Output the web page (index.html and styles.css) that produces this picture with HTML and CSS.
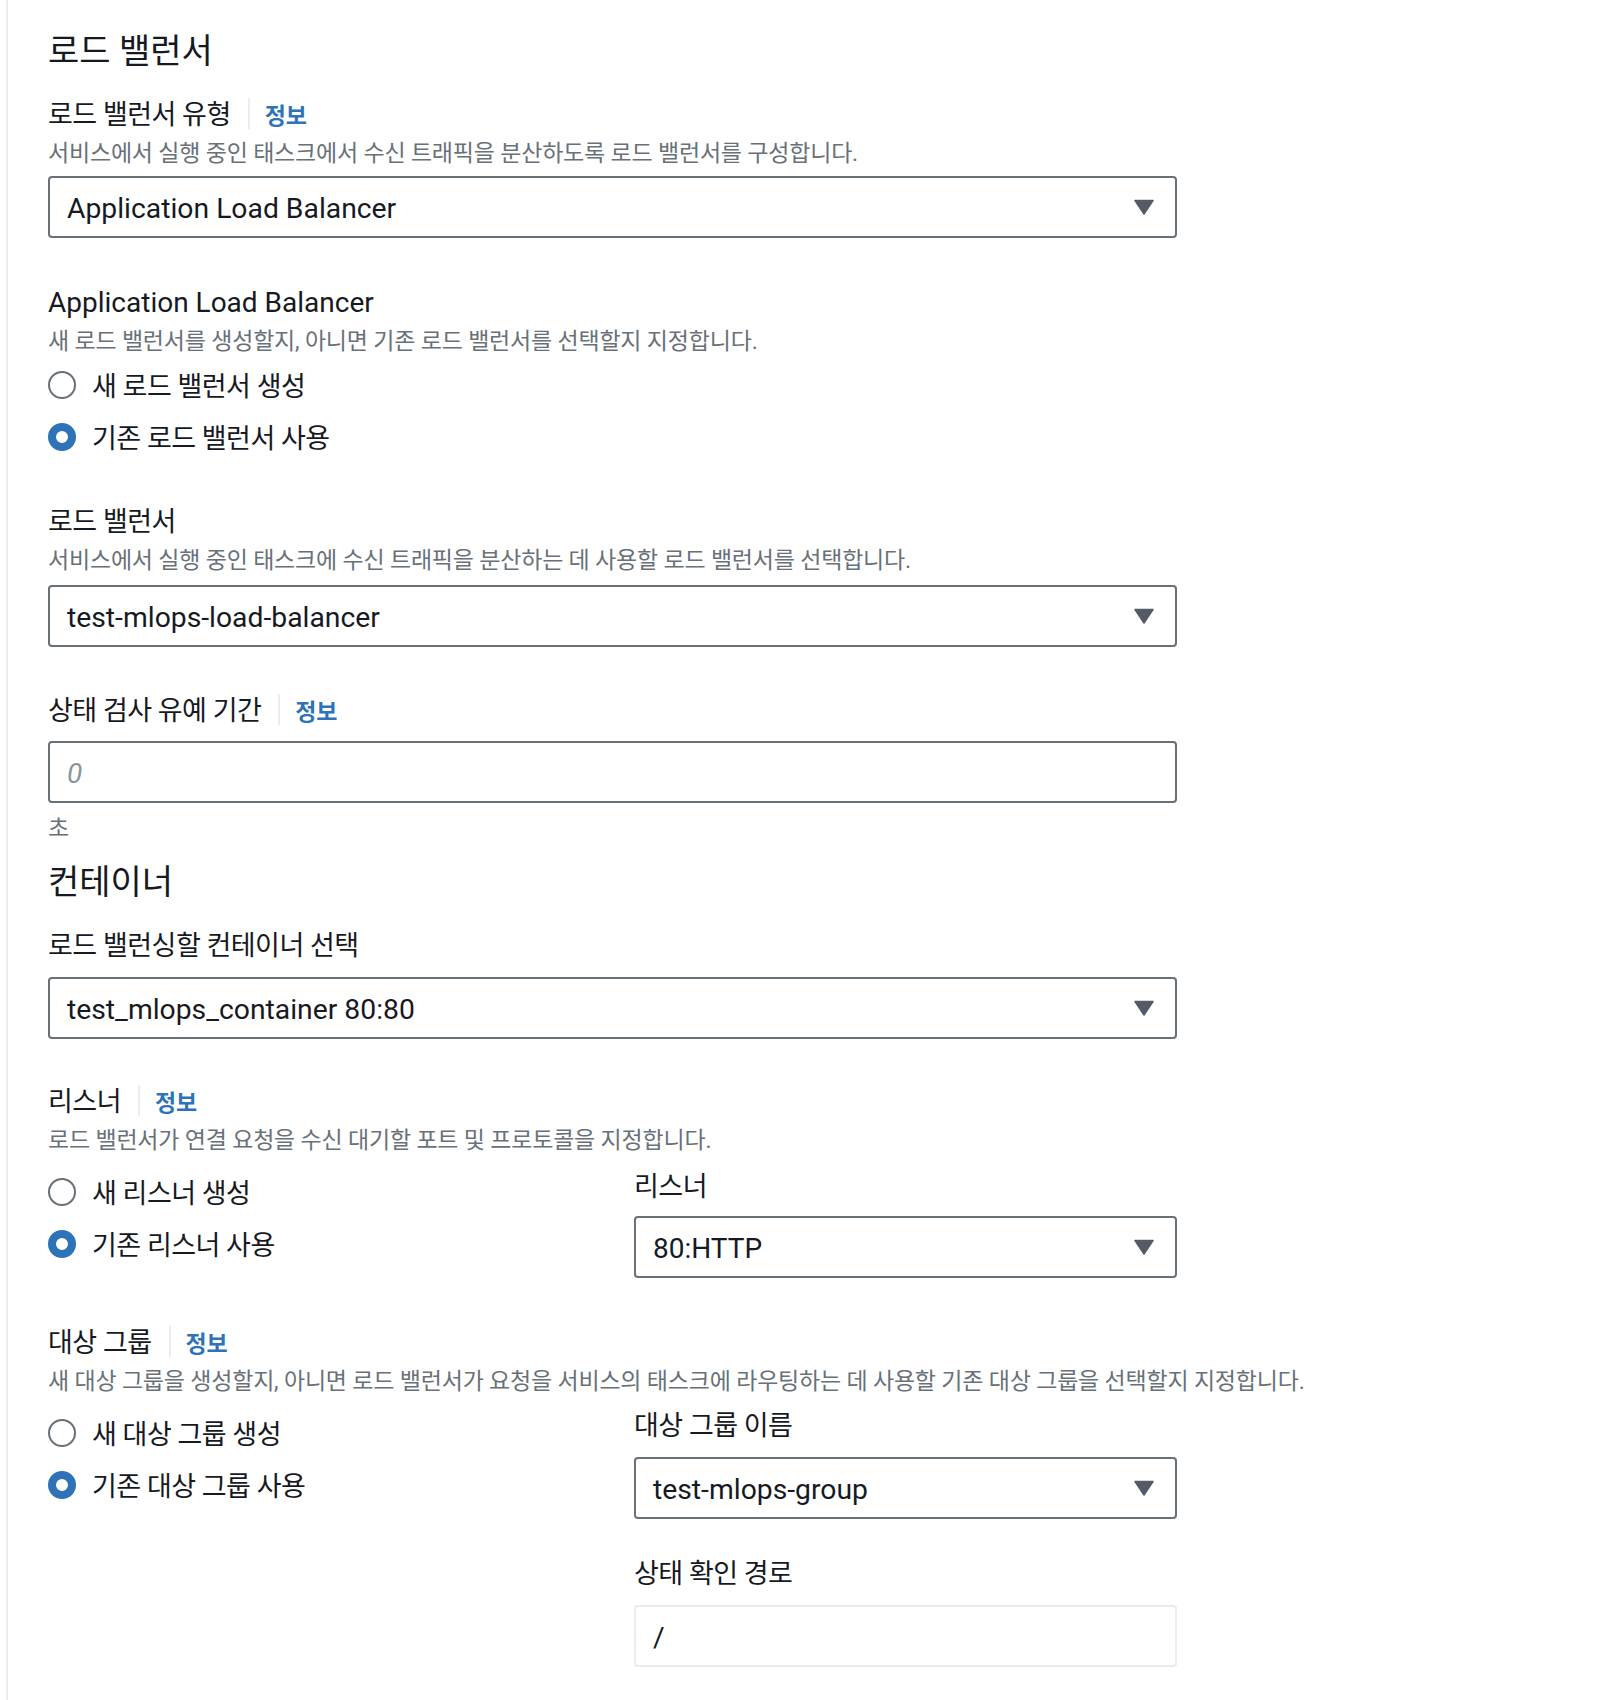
FILE: index.html
```html
<!DOCTYPE html>
<html lang="ko">
<head>
<meta charset="utf-8">
<title>로드 밸런서</title>
<link rel="stylesheet" href="styles.css">
</head>
<body>
<div class="page">
  <main class="content">
    <h2 class="heading">로드 밸런서</h2>

    <section class="field mt22">
      <div class="label-row"><span class="label">로드 밸런서 유형</span><span class="sep"></span><a class="info" href="#">정보</a></div>
      <div class="desc">서비스에서 실행 중인 태스크에서 수신 트래픽을 분산하도록 로드 밸런서를 구성합니다.</div>
      <div class="select mt7"><span class="value">Application Load Balancer</span><svg class="caret" viewBox="0 0 20 16"><path d="M1 1.5 H19 L10 15 Z" fill="#545b64" stroke="#545b64" stroke-width="1.5" stroke-linejoin="round"/></svg></div>
    </section>

    <section class="field mt43">
      <div class="label-row"><span class="label latin">Application Load Balancer</span></div>
      <div class="desc">새 로드 밸런서를 생성할지, 아니면 기존 로드 밸런서를 선택할지 지정합니다.</div>
      <div class="radios mt8">
        <div class="radio"><span class="dot"></span><span class="rlabel">새 로드 밸런서 생성</span></div>
        <div class="radio"><span class="dot on"></span><span class="rlabel">기존 로드 밸런서 사용</span></div>
      </div>
    </section>

    <section class="field mt43">
      <div class="label-row"><span class="label">로드 밸런서</span></div>
      <div class="desc">서비스에서 실행 중인 태스크에 수신 트래픽을 분산하는 데 사용할 로드 밸런서를 선택합니다.</div>
      <div class="select mt9"><span class="value">test-mlops-load-balancer</span><svg class="caret" viewBox="0 0 20 16"><path d="M1 1.5 H19 L10 15 Z" fill="#545b64" stroke="#545b64" stroke-width="1.5" stroke-linejoin="round"/></svg></div>
    </section>

    <section class="field mt42">
      <div class="label-row"><span class="label">상태 검사 유예 기간</span><span class="sep"></span><a class="info" href="#">정보</a></div>
      <div class="input mt12"><span class="placeholder">0</span></div>
      <div class="desc mt7">초</div>
    </section>

    <h2 class="heading mt14">컨테이너</h2>

    <section class="field mt22">
      <div class="label-row"><span class="label">로드 밸런싱할 컨테이너 선택</span></div>
      <div class="select mt13"><span class="value">test_mlops_container 80:80</span><svg class="caret" viewBox="0 0 20 16"><path d="M1 1.5 H19 L10 15 Z" fill="#545b64" stroke="#545b64" stroke-width="1.5" stroke-linejoin="round"/></svg></div>
    </section>

    <section class="field mt41">
      <div class="label-row"><span class="label">리스너</span><span class="sep"></span><a class="info" href="#">정보</a></div>
      <div class="desc">로드 밸런서가 연결 요청을 수신 대기할 포트 및 프로토콜을 지정합니다.</div>
      <div class="cols mt9">
        <div class="radios pt7">
          <div class="radio"><span class="dot"></span><span class="rlabel">새 리스너 생성</span></div>
          <div class="radio"><span class="dot on"></span><span class="rlabel">기존 리스너 사용</span></div>
        </div>
        <div class="col">
          <div class="label-row"><span class="label">리스너</span></div>
          <div class="select mt11"><span class="value http">80:HTTP</span><svg class="caret" viewBox="0 0 20 16"><path d="M1 1.5 H19 L10 15 Z" fill="#545b64" stroke="#545b64" stroke-width="1.5" stroke-linejoin="round"/></svg></div>
        </div>
      </div>
    </section>

    <section class="field mt43">
      <div class="label-row"><span class="label">대상 그룹</span><span class="sep"></span><a class="info" href="#">정보</a></div>
      <div class="desc">새 대상 그룹을 생성할지, 아니면 로드 밸런서가 요청을 서비스의 태스크에 라우팅하는 데 사용할 기존 대상 그룹을 선택할지 지정합니다.</div>
      <div class="cols mt7">
        <div class="radios pt9">
          <div class="radio"><span class="dot"></span><span class="rlabel">새 대상 그룹 생성</span></div>
          <div class="radio"><span class="dot on"></span><span class="rlabel">기존 대상 그룹 사용</span></div>
        </div>
        <div class="col">
          <div class="label-row"><span class="label">대상 그룹 이름</span></div>
          <div class="select mt13"><span class="value">test-mlops-group</span><svg class="caret" viewBox="0 0 20 16"><path d="M1 1.5 H19 L10 15 Z" fill="#545b64" stroke="#545b64" stroke-width="1.5" stroke-linejoin="round"/></svg></div>
          <div class="label-row mt33"><span class="label">상태 확인 경로</span></div>
          <div class="input light mt13"><span class="value">/</span></div>
        </div>
      </div>
    </section>
  </main>
</div>
</body>
</html>
```

FILE: styles.css
```css
* { box-sizing: border-box; }
html, body { margin: 0; padding: 0; background: #ffffff; }
body {
  font-family: "Roboto", "Noto Sans CJK KR", sans-serif;
  color: #16191f;
}
.page {
  margin-left: 6px;
  border-left: 2px solid #e9ebed;
  min-height: 1700px;
  padding-left: 40px;
  padding-top: 27px;
}
.content {
  width: 1129px;
  display: flex;
  flex-direction: column;
}
.heading {
  margin: 0;
  padding-top: 4px;
  font-size: 34px;
  font-weight: 400;
  line-height: 40px;
  color: #16191f;
}
.field { display: flex; flex-direction: column; }
.label-row {
  display: flex;
  align-items: center;
  height: 40px;
  padding-top: 4px;
}
.label {
  font-size: 27px;
  letter-spacing: -0.5px;
  line-height: 36px;
  font-weight: 400;
  color: #16191f;
}
.label.latin {
  font-size: 28px;
  letter-spacing: 0;
}
.sep {
  width: 2px;
  height: 31px;
  background: #eaeded;
  margin: -4px 15px 0 17px;
}
.info {
  margin-top: -3px;
  font-size: 23px;
  font-weight: 700;
  color: #2e73b8;
  text-decoration: none;
  letter-spacing: -0.3px;
}
.desc {
  margin-top: 2px;
  padding-top: 4px;
  font-size: 23px;
  line-height: 30px;
  letter-spacing: -0.2px;
  color: #687078;
  white-space: nowrap;
}
.select, .input {
  height: 62px;
  border: 2px solid #687078;
  border-radius: 4px;
  display: flex;
  align-items: center;
  justify-content: space-between;
  padding: 0 21px 0 17px;
  background: #fff;
}
.input.light { border-color: #e9ebed; }
.value {
  font-size: 28.3px;
  line-height: 34px;
  padding-top: 4px;
  color: #16191f;
}
.value.http { font-size: 28px; }
.placeholder {
  font-size: 28px;
  line-height: 34px;
  padding-top: 4px;
  font-style: italic;
  color: #879596;
}
.caret { width: 20px; height: 16px; display: block; }
.radios { display: flex; flex-direction: column; gap: 12px; }
.radio {
  display: flex;
  align-items: center;
  gap: 16px;
  height: 40px;
}
.dot {
  width: 28px;
  height: 28px;
  border-radius: 50%;
  border: 2px solid #687078;
  background: #fff;
  flex: none;
}
.dot.on { border: 8px solid #2e73b8; }
.rlabel {
  font-size: 27px;
  letter-spacing: -0.5px;
  line-height: 36px;
  padding-top: 4px;
  color: #16191f;
}
.cols {
  display: grid;
  grid-template-columns: 1fr 1fr;
  column-gap: 43px;
}
.col { display: flex; flex-direction: column; }

.mt7 { margin-top: 7px; }
.mt8 { margin-top: 8px; }
.mt9 { margin-top: 9px; }
.mt11 { margin-top: 11px; }
.mt12 { margin-top: 12px; }
.mt13 { margin-top: 13px; }
.mt14 { margin-top: 14px; }
.mt22 { margin-top: 22px; }
.mt33 { margin-top: 33px; }
.mt41 { margin-top: 41px; }
.mt42 { margin-top: 42px; }
.mt43 { margin-top: 43px; }
.pt7 { padding-top: 7px; }
.pt9 { padding-top: 9px; }
```
